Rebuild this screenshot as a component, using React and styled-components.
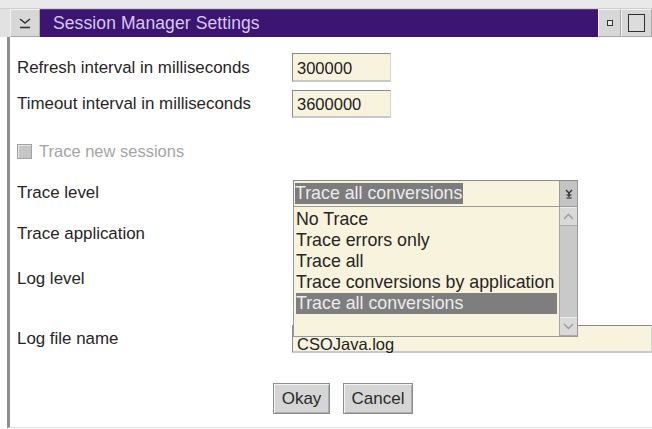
import styled, { createGlobalStyle } from "styled-components";

const GlobalStyle = createGlobalStyle`
  html, body {
    margin: 0;
    padding: 0;
    background: #ffffff;
  }
  body {
    font-family: "Liberation Sans", Arial, Helvetica, sans-serif;
    color: #262626;
  }
`;

const traceLevels = [
  "No Trace",
  "Trace errors only",
  "Trace all",
  "Trace conversions by application",
  "Trace all conversions",
];

export default function App() {
  return (
    <>
      <GlobalStyle />
      <Window>
        <TopStrip />
        <TitleRow>
          <FrameButton $w={30}>
            <svg width="12" height="11" viewBox="0 0 12 11">
              <polyline points="1,1 6,5 11,1" fill="none" stroke="#333" strokeWidth="1.6" />
              <line x1="1" y1="9.5" x2="11" y2="9.5" stroke="#333" strokeWidth="1.6" />
            </svg>
          </FrameButton>
          <TitleBar>Session Manager Settings</TitleBar>
          <FrameButton $w={23}>
            <MinGlyph />
          </FrameButton>
          <FrameButton $w={31}>
            <MaxGlyph />
          </FrameButton>
        </TitleRow>

        <Body>
          <Row $h={29} $top={16}>
            <Label>Refresh interval in milliseconds</Label>
            <TextField>300000</TextField>
          </Row>
          <Row $h={28} $top={8}>
            <Label>Timeout interval in milliseconds</Label>
            <TextField>3600000</TextField>
          </Row>
          <Row $h={20} $top={23}>
            <Check />
            <CheckLabel>Trace new sessions</CheckLabel>
          </Row>
          <Row $h={26} $top={19}>
            <Label>Trace level</Label>
            <Combo>
              <ComboValue>
                <Selected>Trace all conversions</Selected>
              </ComboValue>
              <ComboButton>
                <svg width="8" height="10" viewBox="0 0 8 10">
                  <polyline points="1,1 4,4 7,1" fill="none" stroke="#333" strokeWidth="1.4" />
                  <line x1="4" y1="4" x2="4" y2="8" stroke="#333" strokeWidth="1.4" />
                  <line x1="1.5" y1="6" x2="6.5" y2="6" stroke="#333" strokeWidth="1.2" />
                  <line x1="1.5" y1="9" x2="6.5" y2="9" stroke="#333" strokeWidth="1.2" />
                </svg>
              </ComboButton>
              <ListBox>
                <Items>
                  {traceLevels.map((item) => (
                    <Item key={item} $active={item === "Trace all conversions"}>
                      {item}
                    </Item>
                  ))}
                </Items>
                <ScrollBar>
                  <ScrollArrow>
                    <svg width="11" height="7" viewBox="0 0 11 7">
                      <polyline points="1,6 5.5,1.5 10,6" fill="none" stroke="#9a9a9a" strokeWidth="1.3" />
                    </svg>
                  </ScrollArrow>
                  <ScrollArrow>
                    <svg width="11" height="7" viewBox="0 0 11 7">
                      <polyline points="1,1 5.5,5.5 10,1" fill="none" stroke="#9a9a9a" strokeWidth="1.3" />
                    </svg>
                  </ScrollArrow>
                </ScrollBar>
              </ListBox>
            </Combo>
          </Row>
          <Row $h={24} $top={16}>
            <Label>Trace application</Label>
          </Row>
          <Row $h={24} $top={21}>
            <Label>Log level</Label>
          </Row>
          <Row $h={28} $top={34}>
            <Label>Log file name</Label>
            <TextField $wide>CSOJava.log</TextField>
          </Row>
          <ButtonRow>
            <PushButton $w={57}>Okay</PushButton>
            <PushButton $w={70}>Cancel</PushButton>
          </ButtonRow>
        </Body>
      </Window>
    </>
  );
}

const Window = styled.div`
  width: 652px;
  height: 429px;
  overflow: hidden;
  background: #ffffff;
`;

const TopStrip = styled.div`
  height: 8px;
  background: #e9e9e9;
  border-bottom: 1px solid #cfcfcf;
`;

const TitleRow = styled.div`
  display: flex;
  height: 28px;
  padding-left: 10px;
  background: #e2e2e2;
`;

const FrameButton = styled.div`
  flex: 0 0 ${(p) => p.$w}px;
  display: flex;
  align-items: center;
  justify-content: center;
  background: #d7d7d7;
  box-sizing: border-box;
  border-top: 1px solid #f2f2f2;
  border-left: 1px solid #f2f2f2;
  border-right: 1px solid #a8a8a8;
  border-bottom: 1px solid #a8a8a8;
`;

const MinGlyph = styled.div`
  width: 4px;
  height: 4px;
  border: 1.5px solid #333;
  background: #e8e8e8;
`;

const MaxGlyph = styled.div`
  width: 15px;
  height: 16px;
  border: 1.5px solid #2e2e2e;
  background: #dcdcdc;
`;

const TitleBar = styled.div`
  flex: 1;
  display: flex;
  align-items: center;
  padding-left: 13px;
  background: #3c1472;
  border-top: 1px solid #5a3a8a;
  color: #d6c9f0;
  font-size: 17.5px;
  letter-spacing: 0.1px;
`;

const Body = styled.div`
  position: relative;
  display: flex;
  flex-direction: column;
  margin-left: 7px;
  height: 391px;
  box-sizing: border-box;
  padding-left: 7px;
  border-left: 3px solid #8e8e8e;
  border-bottom: 1px solid #e2e2e2;
`;

const Row = styled.div`
  display: flex;
  align-items: center;
  height: ${(p) => p.$h}px;
  margin-top: ${(p) => p.$top}px;
  flex: 0 0 auto;
`;

const Label = styled.div`
  flex: 0 0 275px;
  font-size: 16.9px;
  color: #262626;
  white-space: nowrap;
`;

const TextField = styled.div`
  box-sizing: border-box;
  width: ${(p) => (p.$wide ? "380px" : "99px")};
  height: 100%;
  display: flex;
  align-items: center;
  padding: ${(p) => (p.$wide ? "11px" : "2px")} 0 0 4px;
  background: #f8f3dc;
  border-top: 1px solid #8a8a8a;
  border-left: 1px solid #8a8a8a;
  border-right: 1px solid #d6d6d6;
  border-bottom: 2px solid #c9c9c9;
  font-size: 16.5px;
  color: #222;
  white-space: nowrap;
`;

const Check = styled.div`
  width: 13px;
  height: 13px;
  margin-right: 7px;
  background: #c6c6c6;
  border: 1px solid #a2a2a2;
  box-shadow: inset 1px 1px 0 #e4e4e4;
`;

const CheckLabel = styled.div`
  font-size: 16.5px;
  color: #a5a5a5;
`;

const Combo = styled.div`
  position: relative;
  display: flex;
  width: 285px;
  height: 100%;
  box-sizing: border-box;
  margin-left: 1px;
  border-top: 1px solid #8c8c8c;
  border-left: 1px solid #8c8c8c;
  background: #f8f3dc;
`;

const ComboValue = styled.div`
  flex: 1;
  display: flex;
  align-items: center;
  padding-left: 1px;
`;

const Selected = styled.span`
  background: #7c7c7c;
  color: #ececec;
  font-size: 17.8px;
  line-height: 21px;
  padding-right: 1px;
`;

const ComboButton = styled.div`
  flex: 0 0 17px;
  display: flex;
  align-items: center;
  justify-content: center;
  background: #c4c4c4;
  border-left: 1px solid #9a9a9a;
  border-right: 1px solid #9a9a9a;
`;

const ListBox = styled.div`
  position: absolute;
  top: 25px;
  left: -1px;
  z-index: 2;
  display: flex;
  width: 285px;
  height: 131px;
  box-sizing: border-box;
  background: #f8f3dc;
  border: 1px solid #9a9a9a;
`;

const Items = styled.div`
  flex: 1;
  padding: 2px 2px 0 2px;
`;

const Item = styled.div`
  font-size: 17.8px;
  line-height: 21px;
  white-space: nowrap;
  color: ${(p) => (p.$active ? "#ececec" : "#262626")};
  background: ${(p) => (p.$active ? "#7e7e7e" : "transparent")};
`;

const ScrollBar = styled.div`
  flex: 0 0 17px;
  display: flex;
  flex-direction: column;
  justify-content: space-between;
  background: #c9c9c9;
  border-left: 1px solid #a6a6a6;
`;

const ScrollArrow = styled.div`
  height: 17px;
  display: flex;
  align-items: center;
  justify-content: center;
  background: #d9d9d9;
  border-top: 1px solid #eeeeee;
  border-bottom: 1px solid #a8a8a8;
`;

const ButtonRow = styled.div`
  display: flex;
  gap: 13px;
  margin-top: 30px;
  padding-left: 256px;
`;

const PushButton = styled.div`
  width: ${(p) => p.$w}px;
  height: 31px;
  box-sizing: border-box;
  display: flex;
  align-items: center;
  justify-content: center;
  background: #d5d5d5;
  border: 1px solid #8e8e8e;
  box-shadow: inset 1px 1px 0 #f4f4f4, inset -1px -1px 0 #acacac;
  font-size: 17px;
  color: #2a2a2a;
`;
